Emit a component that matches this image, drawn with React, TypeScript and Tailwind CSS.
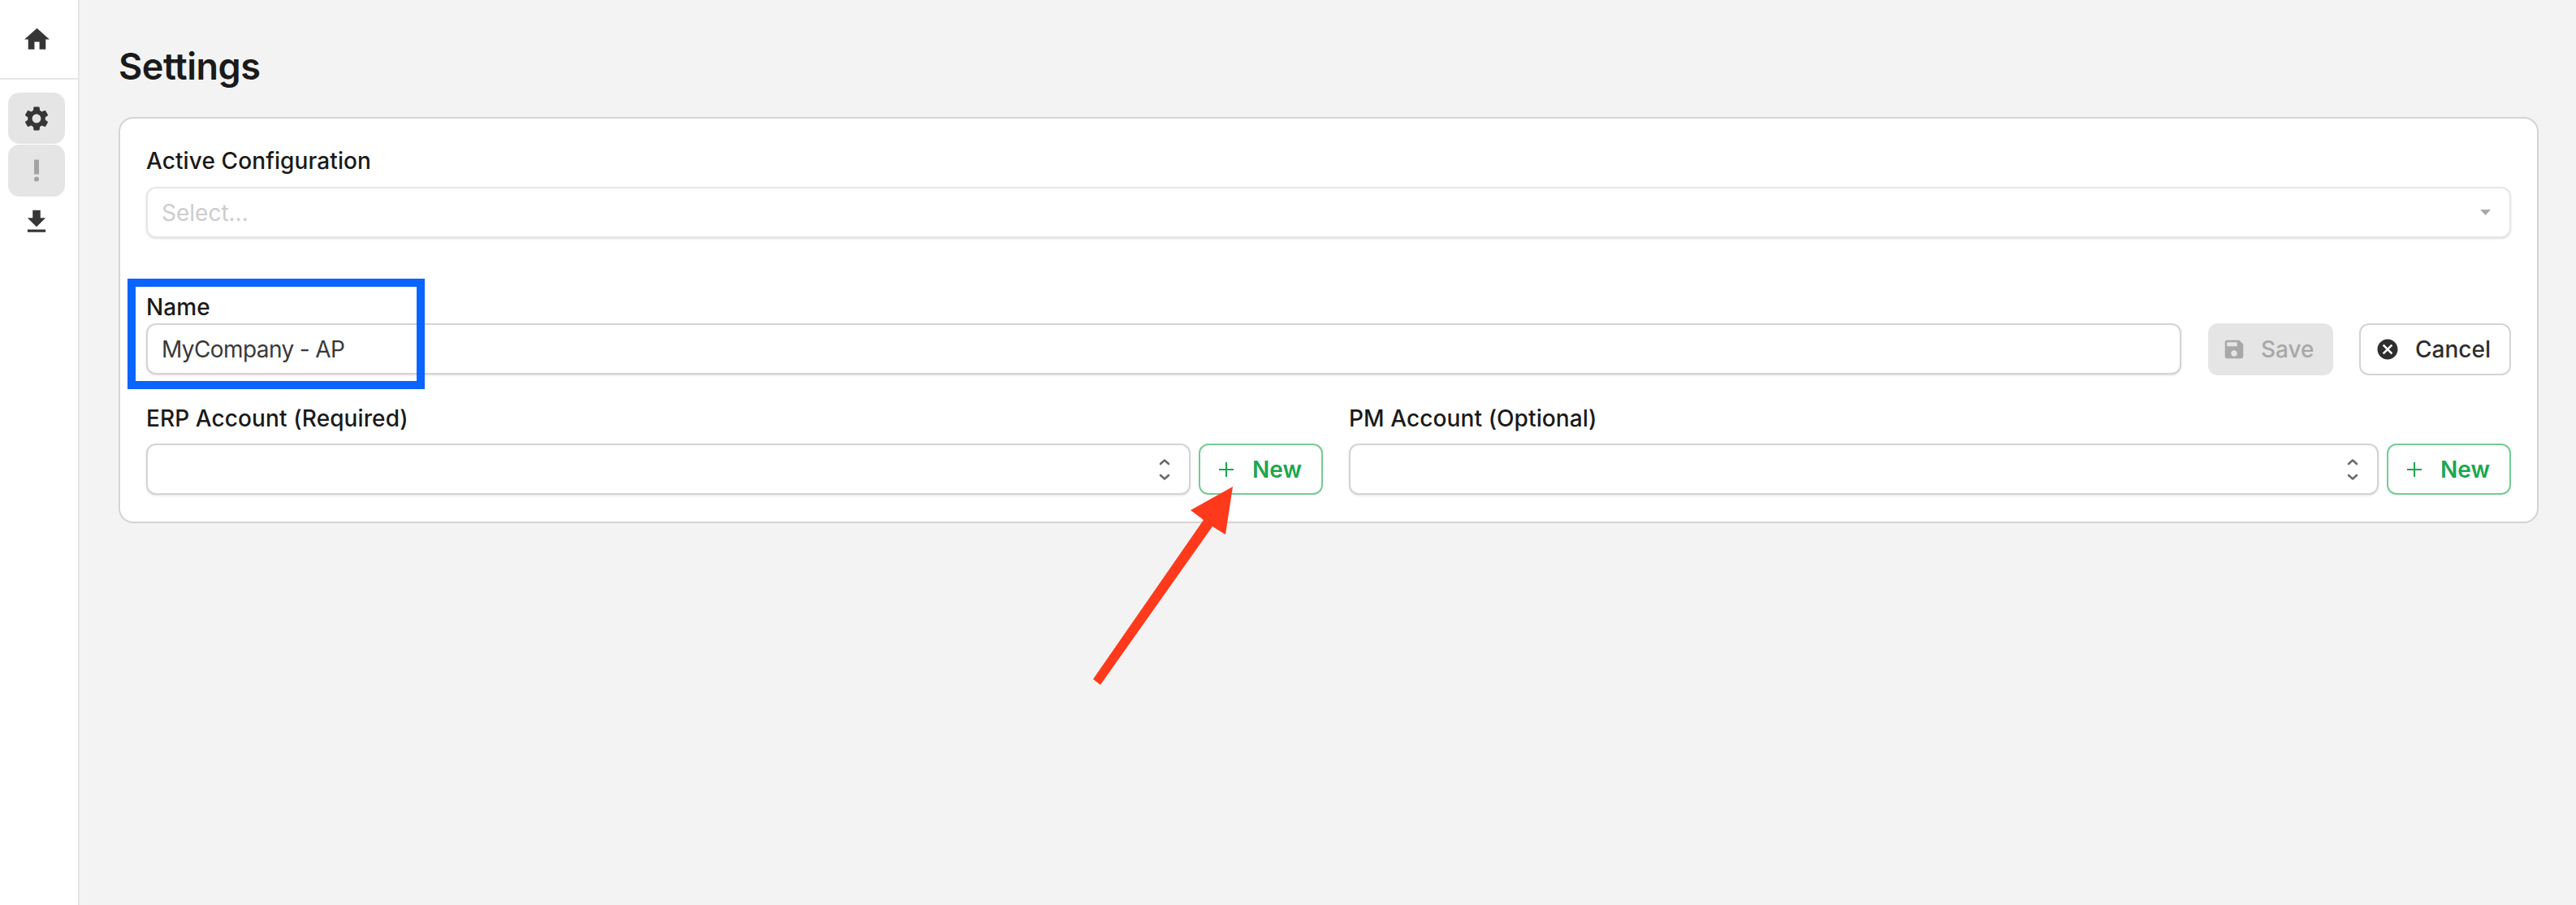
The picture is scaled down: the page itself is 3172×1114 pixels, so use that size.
import { MdHome, MdSettings, MdPriorityHigh, MdFileDownload, MdSave, MdCancel } from "react-icons/md";

function Chevrons() {
  return (
    <svg width="14" height="28" viewBox="0 0 14 28" fill="none" stroke="#6b6b6b" strokeWidth="2.6" strokeLinecap="round" strokeLinejoin="round">
      <path d="M2 7 L7 2.5 L12 7" />
      <path d="M2 21 L7 25.5 L12 21" />
    </svg>
  );
}

function SelectBox() {
  return (
    <div className="flex-1 h-[63px] rounded-[12px] border-2 border-[#d4d4d4] bg-white shadow-sm flex items-center justify-end pr-[23px]">
      <Chevrons />
    </div>
  );
}

function NewButton() {
  return (
    <button className="w-[153px] h-[63px] rounded-[12px] border-2 border-[#74cb93] bg-white flex items-center pl-[23px] text-[#1ca750] text-[28px] font-semibold">
      <svg width="18" height="18" viewBox="0 0 18 18" stroke="#1ca750" strokeWidth="2" className="mr-[23px]">
        <path d="M9 0V18M0 9H18" />
      </svg>
      New
    </button>
  );
}

export default function App() {
  return (
    <div className="relative w-[3172px] h-[1114px] flex bg-[#f3f3f3] text-[#1a1a1a] overflow-hidden" style={{ fontFamily: "Inter, sans-serif" }}>
      <aside className="w-[98px] shrink-0 bg-white border-r-2 border-[#e5e5e5] flex flex-col">
        <div className="h-[98px] border-b-2 border-[#e5e5e5] flex items-center pl-[10px]">
          <div className="w-[70px] flex justify-center text-[#363636]">
            <MdHome size={37} />
          </div>
        </div>
        <div className="pt-[16px] pl-[10px] pr-[16px] flex flex-col gap-px">
          <div className="h-[63px] rounded-[14px] bg-[#e5e5e5] flex items-center justify-center text-[#363636]">
            <MdSettings size={36} />
          </div>
          <div className="h-[64px] rounded-[14px] bg-[#e5e5e5] flex items-center justify-center text-[#a3a3a3]">
            <MdPriorityHigh size={36} />
          </div>
          <div className="h-[60px] flex items-center justify-center text-[#363636]">
            <MdFileDownload size={38} />
          </div>
        </div>
      </aside>

      <main className="flex-1 pl-[48px] pr-[46px]">
        <h1 className="h-[144px] pt-[54px] text-[45px] leading-[56px] font-semibold tracking-[-0.5px] text-[#1a1a1a]">Settings</h1>
        <section className="rounded-[18px] border-2 border-[#d4d4d4] bg-white px-[32px] pt-[34px] pb-[33px]">
          <label className="block h-[36px] mb-[14px] text-[28px] leading-[36px] font-[450] tracking-[0.1px]">Active Configuration</label>
          <div className="h-[63px] rounded-[12px] border-2 border-[#e6e6e6] bg-white shadow-sm flex items-center justify-between pl-[17px] pr-[23px] text-[28px] text-[#cdcdcd]">
            <span>Select...</span>
            <svg width="13" height="7" viewBox="0 0 13 7" fill="#a8a8a8"><path d="M0 0H13L6.5 7Z" /></svg>
          </div>

          <label className="block h-[36px] mt-[67px] mb-[2px] text-[28px] leading-[36px] font-[450] tracking-[0.1px]">Name</label>
          <div className="flex items-stretch">
            <input
              readOnly
              value="MyCompany - AP"
              className="flex-1 h-[63px] rounded-[12px] border-2 border-[#d4d4d4] bg-white shadow-sm pl-[17px] text-[28px] tracking-[-0.6px] text-[#3a3a3a] outline-none"
            />
            <button className="ml-[33px] w-[154px] h-[64px] rounded-[12px] bg-[#e5e5e5] flex items-center pl-[20px] text-[28px] font-medium text-[#a8a8a8]">
              <MdSave size={30} className="mr-[18px] -ml-[3px]" />
              Save
            </button>
            <button className="ml-[32px] w-[187px] h-[64px] rounded-[12px] border-2 border-[#d4d4d4] bg-white flex items-center pl-[18px] text-[28px] font-medium text-[#2e2e2e]">
              <MdCancel size={30} className="mr-[19px]" />
              Cancel
            </button>
          </div>

          <div className="flex gap-[32px] mt-[35px]">
            <div className="w-[1449px]">
              <label className="block h-[36px] mb-[13px] text-[28px] leading-[36px] font-[450] tracking-[0.1px]">ERP Account (Required)</label>
              <div className="flex gap-[10px]">
                <SelectBox />
                <NewButton />
              </div>
            </div>
            <div className="flex-1">
              <label className="block h-[36px] mb-[13px] text-[28px] leading-[36px] font-[450] tracking-[0.1px]">PM Account (Optional)</label>
              <div className="flex gap-[10px]">
                <SelectBox />
                <NewButton />
              </div>
            </div>
          </div>
        </section>
      </main>

      <div className="absolute left-[157px] top-[343px] w-[366px] h-[136px] border-[10px] border-[#0a64ff]" />

      <svg className="absolute left-0 top-0 pointer-events-none" width="3172" height="1114">
        <polygon fill="#ff3a1c" points="1518,599 1466,628 1482,640 1346,836 1355,843 1493,648 1509,658" />
      </svg>
    </div>
  );
}
